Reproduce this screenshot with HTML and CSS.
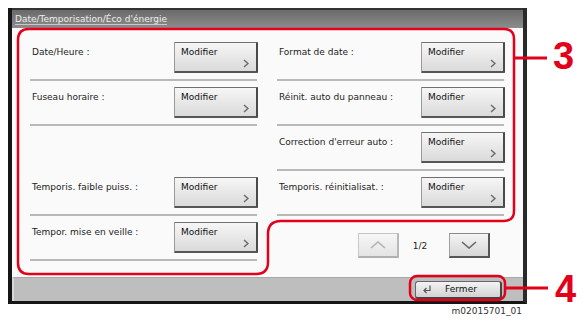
FILE: index.html
```html
<!DOCTYPE html>
<html lang="fr">
<head>
    <meta charset="UTF-8">
    <meta name="viewport" content="width=device-width, initial-scale=1.0">
    <title>Date/Temporisation/Éco d'énergie</title>
    <link rel="stylesheet" href="styles.css">
</head>
<body>
    <div class="page">
        <div class="panel">
            <div class="panel-title"><span>Date/Temporisation/Éco d'énergie</span></div>
            <div class="panel-body">
                <div class="col">
                    <div class="row">
                        <span class="row-label">Date/Heure :</span>
                        <button class="btn-edit">Modifier<svg class="chev" viewBox="0 0 6 9"><polyline points="1,1 5,4.5 1,8"/></svg></button>
                    </div>
                    <div class="row">
                        <span class="row-label">Fuseau horaire :</span>
                        <button class="btn-edit">Modifier<svg class="chev" viewBox="0 0 6 9"><polyline points="1,1 5,4.5 1,8"/></svg></button>
                    </div>
                    <div class="row row-empty"></div>
                    <div class="row">
                        <span class="row-label">Temporis. faible puiss. :</span>
                        <button class="btn-edit">Modifier<svg class="chev" viewBox="0 0 6 9"><polyline points="1,1 5,4.5 1,8"/></svg></button>
                    </div>
                    <div class="row">
                        <span class="row-label">Tempor. mise en veille :</span>
                        <button class="btn-edit">Modifier<svg class="chev" viewBox="0 0 6 9"><polyline points="1,1 5,4.5 1,8"/></svg></button>
                    </div>
                </div>
                <div class="col">
                    <div class="row">
                        <span class="row-label">Format de date :</span>
                        <button class="btn-edit">Modifier<svg class="chev" viewBox="0 0 6 9"><polyline points="1,1 5,4.5 1,8"/></svg></button>
                    </div>
                    <div class="row">
                        <span class="row-label">Réinit. auto du panneau :</span>
                        <button class="btn-edit">Modifier<svg class="chev" viewBox="0 0 6 9"><polyline points="1,1 5,4.5 1,8"/></svg></button>
                    </div>
                    <div class="row">
                        <span class="row-label">Correction d'erreur auto :</span>
                        <button class="btn-edit">Modifier<svg class="chev" viewBox="0 0 6 9"><polyline points="1,1 5,4.5 1,8"/></svg></button>
                    </div>
                    <div class="row">
                        <span class="row-label">Temporis. réinitialisat. :</span>
                        <button class="btn-edit">Modifier<svg class="chev" viewBox="0 0 6 9"><polyline points="1,1 5,4.5 1,8"/></svg></button>
                    </div>
                    <div class="pager">
                        <button class="btn-page disabled"><svg viewBox="0 0 16 8"><polyline points="1,7 8,1 15,7"/></svg></button>
                        <span class="page-num">1/2</span>
                        <button class="btn-page"><svg viewBox="0 0 16 8"><polyline points="1,1 8,7 15,1"/></svg></button>
                    </div>
                </div>
            </div>
            <div class="panel-footer">
                <button class="btn-close">
                    <svg class="enter" viewBox="0 0 10 9"><polyline points="8,0.5 8,5.5 2,5.5"/><polyline points="4.5,3 2,5.5 4.5,8"/></svg>
                    <span>Fermer</span>
                </button>
            </div>
        </div>
        <p class="ref">m02015701_01</p>

        <!-- callouts drawn over the screen -->
        <svg class="marks" viewBox="0 0 585 321">
            <path d="M29 29 H504 Q514 29 514 39 V211 Q514 221 504 221 H281 Q268 221 268 234 V262 Q268 274 256 274 H29 Q18 274 18 263 V40 Q18 29 29 29 Z"/>
            <rect x="410" y="276" width="95" height="24" rx="7"/>
            <line class="lead" x1="514" y1="58" x2="547" y2="58"/>
            <line class="lead" x1="505" y1="288" x2="548" y2="288"/>
        </svg>
        <span class="callout callout-3">3</span>
        <span class="callout callout-4">4</span>
    </div>
</body>
</html>
```

FILE: styles.css
```css
/* Screen styles */
* {
    box-sizing: border-box;
}

body {
    margin: 0;
    background: #fff;
    font-family: "DejaVu Sans", Verdana, sans-serif;
    color: #222;
}

.page {
    position: relative;
    width: 585px;
    height: 321px;
    padding: 8px 0 0 8px;
}

.panel {
    width: 519px;
    border-left: 4px solid #161616;
    border-right: 4px solid #2a2a2a;
    border-bottom: 3px solid #161616;
    background: #fafafa;
}

.panel-title {
    height: 20px;
    border-top: 2px solid #333;
    background: linear-gradient(#6a6a6a, #8c8c8c);
    padding: 4px 0 0 3px;
    font-size: 9px;
    line-height: 11px;
    color: #eee;
}

.panel-title span {
    border-bottom: 1px solid #c8c8c8;
}

.panel-body {
    height: 249px;
    display: flex;
    gap: 20px;
    padding: 8px 18px 0 18px;
}

.col {
    width: 227px;
}

.row {
    height: 45px;
    display: flex;
    justify-content: space-between;
    align-items: flex-start;
    padding-top: 6px;
    border-bottom: 2px solid #b9b9b9;
}

.row-empty {
    border-bottom: none;
}

.row-label {
    padding: 5px 0 0 2px;
    font-size: 9px;
    line-height: 11px;
}

.btn-edit {
    position: relative;
    width: 84px;
    height: 31px;
    display: flex;
    align-items: flex-start;
    padding: 4px 0 0 6px;
    margin-right: -1px;
    font-family: inherit;
    font-size: 9px;
    line-height: 11px;
    color: #111;
    background: linear-gradient(#f6f6f6, #dadada);
    border-top: 1px solid #707070;
    border-left: 1px solid #9a9a9a;
    border-right: 2px solid #4a4a4a;
    border-bottom: 2px solid #555;
    border-radius: 1px;
}

.chev {
    position: absolute;
    right: 7px;
    bottom: 3px;
    width: 6px;
    height: 9px;
    fill: none;
    stroke: #6a6a6a;
    stroke-width: 1.5;
}

.pager {
    display: flex;
    justify-content: flex-end;
    align-items: center;
    margin-top: 17px;
    padding-right: 14px;
}

.btn-page {
    width: 41px;
    height: 25px;
    padding: 0;
    display: flex;
    align-items: center;
    justify-content: center;
    background: linear-gradient(#f4f4f4, #d6d6d6);
    border-top: 1px solid #8a8a8a;
    border-left: 1px solid #a0a0a0;
    border-right: 2px solid #555;
    border-bottom: 2px solid #555;
}

.btn-page svg {
    width: 16px;
    height: 8px;
    fill: none;
    stroke: #666;
    stroke-width: 1.6;
}

.btn-page.disabled {
    background: linear-gradient(#f6f6f6, #e4e4e4);
    border-color: #c4c4c4 #b8b8b8 #b0b0b0 #c8c8c8;
}

.btn-page.disabled svg {
    stroke: #b4b4b4;
}

.page-num {
    width: 50px;
    padding-right: 8px;
    text-align: center;
    font-size: 9px;
}

.panel-footer {
    height: 24px;
    display: flex;
    justify-content: flex-end;
    align-items: center;
    padding-right: 21px;
    background: #bebebe;
    border-top: 1px solid #a8a8a8;
    border-left: 2px solid #d8d8d8;
}

.btn-close {
    width: 87px;
    height: 18px;
    display: flex;
    align-items: center;
    padding: 0 0 0 6px;
    font-family: inherit;
    font-size: 9px;
    color: #111;
    background: linear-gradient(#f4f4f4, #d2d2d2);
    border: 1px solid #666;
    border-right: 2px solid #444;
    border-bottom: 2px solid #444;
    border-radius: 3px;
}

.btn-close span {
    flex: 1;
    text-align: center;
    padding-right: 10px;
}

.enter {
    width: 10px;
    height: 9px;
    fill: none;
    stroke: #555;
    stroke-width: 1.2;
}

.ref {
    margin: 2px 0 0;
    width: 514px;
    text-align: right;
    font-size: 9px;
    color: #333;
}

.marks {
    position: absolute;
    left: 0;
    top: 0;
    width: 585px;
    height: 321px;
    fill: none;
    stroke: #e2001a;
    stroke-width: 2.5;
    pointer-events: none;
}

.marks .lead {
    stroke-width: 3;
}

.callout {
    position: absolute;
    font-family: "Liberation Sans", Arial, sans-serif;
    font-weight: bold;
    font-size: 38px;
    line-height: 1;
    color: #e2001a;
}

.callout-3 {
    left: 553px;
    top: 37px;
}

.callout-4 {
    left: 555px;
    top: 270px;
}
```
